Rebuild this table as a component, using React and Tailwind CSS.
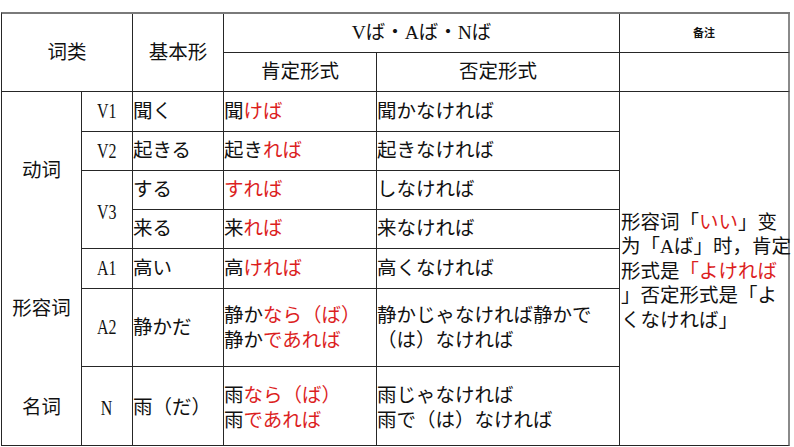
import React from "react";

const R = ({ children }) => <span className="text-[#dc1f1f]">{children}</span>;
const L = ({ children }) => (
  <span className="inline-block text-[21px] scale-x-[0.76] font-['Liberation_Serif',serif]">{children}</span>
);

const base = "flex items-center border-r border-b border-[#262626]";
const noB = "flex items-center border-r border-r-[#262626]";
const last = "flex items-center border-b border-b-[#262626] border-r-2 border-r-[#8a8a8a]";

export default function App() {
  return (
    <div className="w-[794px] h-[447px] bg-white overflow-hidden pt-[12px] font-['Liberation_Serif','Noto_Sans_CJK_SC',serif] text-[#111] text-[19.5px] leading-none">
      <div className="ml-px w-[789px] grid grid-cols-[80px_51px_91px_153px_243px_170px] grid-rows-[39px_39px_40px_39px_39px_39px_40px_78px_79px] border-t-2 border-t-[#7a7a7a] border-l border-l-[#262626]">
        {/* header */}
        <div className={`${base} col-start-1 col-span-2 row-start-1 row-span-2 justify-center`}>词类</div>
        <div className={`${base} col-start-3 row-start-1 row-span-2 justify-center`}>基本形</div>
        <div className={`${base} col-start-4 col-span-2 row-start-1 justify-center`}>Vば・Aば・Nば</div>
        <div className={`${last} col-start-6 row-start-1 justify-center text-[11px] font-bold`}>备注</div>
        <div className={`${base} col-start-4 row-start-2 justify-center`}>肯定形式</div>
        <div className={`${base} col-start-5 row-start-2 justify-center`}>否定形式</div>
        <div className={`${last} col-start-6 row-start-2`}></div>

        {/* column 1 */}
        <div className={`${noB} col-start-1 row-start-3 row-span-4 justify-center`}>动词</div>
        <div className={`${noB} col-start-1 row-start-7 row-span-2 justify-center pt-[2px]`}>形容词</div>
        <div className={`${base} col-start-1 row-start-9 justify-center pt-[4px]`}>名词</div>

        {/* column 2 */}
        <div className={`${base} col-start-2 row-start-3 justify-center`}><L>V1</L></div>
        <div className={`${base} col-start-2 row-start-4 justify-center`}><L>V2</L></div>
        <div className={`${base} col-start-2 row-start-5 row-span-2 justify-center pt-[6px]`}><L>V3</L></div>
        <div className={`${base} col-start-2 row-start-7 justify-center`}><L>A1</L></div>
        <div className={`${base} col-start-2 row-start-8 justify-center`}><L>A2</L></div>
        <div className={`${base} col-start-2 row-start-9 justify-center pt-[4px]`}><L>N</L></div>

        {/* row V1 */}
        <div className={`${base} col-start-3 row-start-3`}>聞く</div>
        <div className={`${base} col-start-4 row-start-3`}>聞<R>けば</R></div>
        <div className={`${base} col-start-5 row-start-3`}>聞かなければ</div>

        {/* row V2 */}
        <div className={`${base} col-start-3 row-start-4`}>起きる</div>
        <div className={`${base} col-start-4 row-start-4`}>起き<R>れば</R></div>
        <div className={`${base} col-start-5 row-start-4`}>起きなければ</div>

        {/* row する */}
        <div className={`${base} col-start-3 row-start-5`}>する</div>
        <div className={`${base} col-start-4 row-start-5`}><R>すれば</R></div>
        <div className={`${base} col-start-5 row-start-5`}>しなければ</div>

        {/* row 来る */}
        <div className={`${base} col-start-3 row-start-6`}>来る</div>
        <div className={`${base} col-start-4 row-start-6`}>来<R>れば</R></div>
        <div className={`${base} col-start-5 row-start-6`}>来なければ</div>

        {/* row A1 */}
        <div className={`${base} col-start-3 row-start-7`}>高い</div>
        <div className={`${base} col-start-4 row-start-7`}>高<R>ければ</R></div>
        <div className={`${base} col-start-5 row-start-7`}>高くなければ</div>

        {/* row A2 */}
        <div className={`${base} col-start-3 row-start-8`}>静かだ</div>
        <div className={`${base} col-start-4 row-start-8 leading-[25px]`}>
          <div>
            <div>静か<R>なら（ば）</R></div>
            <div>静か<R>であれば</R></div>
          </div>
        </div>
        <div className={`${base} col-start-5 row-start-8 leading-[25px]`}>
          <div>
            <div>静かじゃなければ静かで</div>
            <div>（は）なければ</div>
          </div>
        </div>

        {/* row N */}
        <div className={`${base} col-start-3 row-start-9 pt-[4px]`}>雨（だ）</div>
        <div className={`${base} col-start-4 row-start-9 leading-[25px] pt-[4px]`}>
          <div>
            <div>雨<R>なら（ば）</R></div>
            <div>雨<R>であれば</R></div>
          </div>
        </div>
        <div className={`${base} col-start-5 row-start-9 leading-[25px] pt-[4px]`}>
          <div>
            <div>雨じゃなければ</div>
            <div>雨で（は）なければ</div>
          </div>
        </div>

        {/* note column */}
        <div className={`${last} col-start-6 row-start-3 row-span-7 pl-px pt-[7px] leading-[24.5px] whitespace-nowrap`}>
          <div>
            <div>形容词「<R>いい</R>」变</div>
            <div>为「Aば」时，肯定</div>
            <div>形式是<R>「よければ</R></div>
            <div>」否定形式是「よ</div>
            <div>くなければ」</div>
          </div>
        </div>
      </div>
    </div>
  );
}
